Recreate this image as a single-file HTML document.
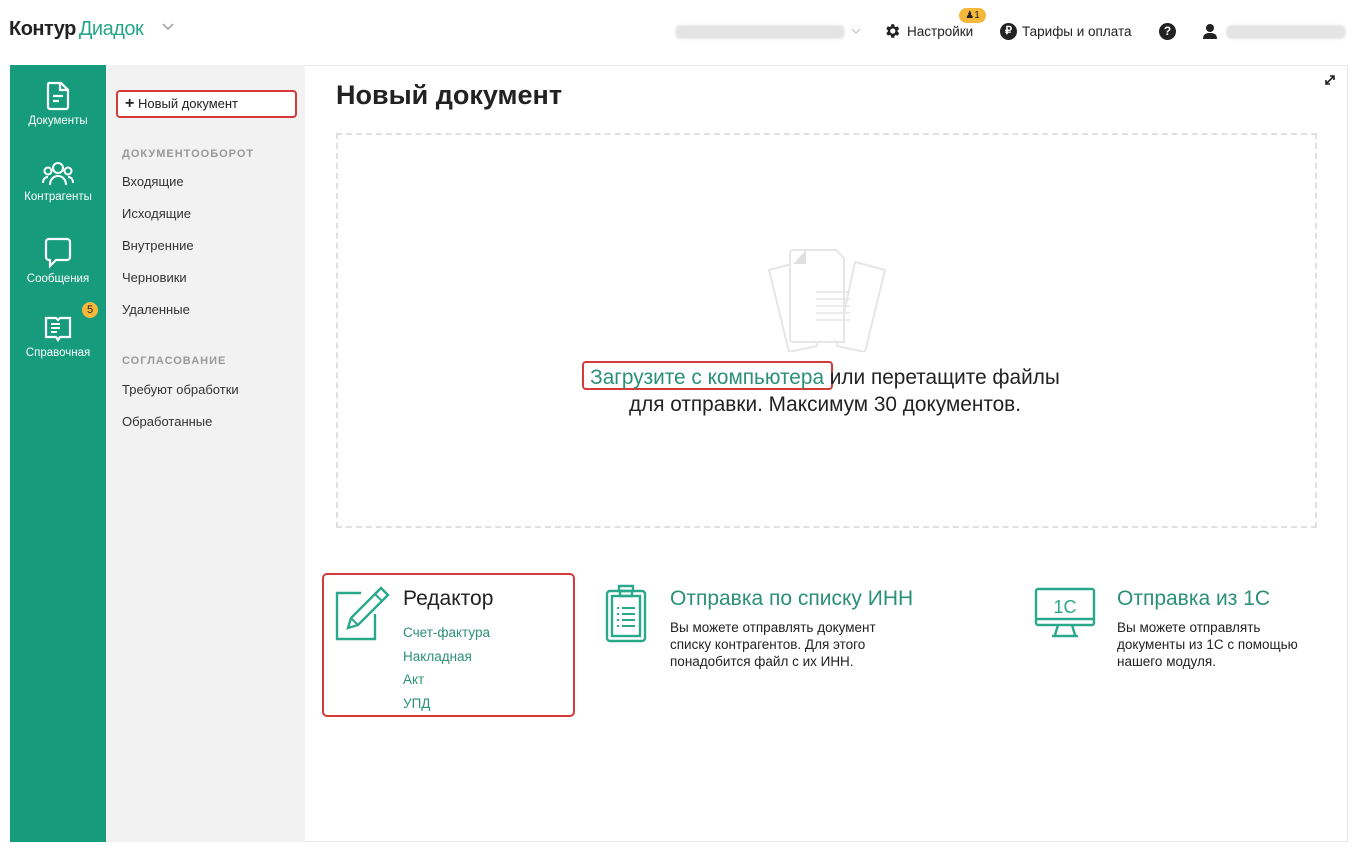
<!DOCTYPE html>
<html><head><meta charset="utf-8"><style>
*{box-sizing:border-box;margin:0;padding:0}
body{width:1361px;height:851px;background:#fff;font-family:"Liberation Sans",sans-serif;color:#222;position:relative;overflow:hidden}
.a{position:absolute}
.blur{background:#e4e4e4;border-radius:6px;filter:blur(1px)}
.nav{left:10px;top:65px;width:96px;height:777px;background:#169b7c}
.ni{position:absolute;left:0;width:96px;text-align:center;color:#fff;font-size:11.5px}
.ni svg{display:block;margin:0 auto 4px}
.menu{left:106px;top:65px;width:199px;height:777px;background:#f2f2f2}
.mi{position:absolute;left:16px;font-size:13px;color:#333}
.mh{position:absolute;left:16px;font-size:11px;color:#999;letter-spacing:1px;font-weight:bold}
.main{left:305px;top:65px;width:1043px;height:777px;border:1px solid #e8e8e8;border-left:none;background:#fff}
.g{color:#2a9077}
</style></head><body>
<div class="a" style="left:9px;top:18px;font-size:20px;font-weight:bold;letter-spacing:-0.5px;color:#222">Контур<span style="font-weight:normal;color:#27a68a;margin-left:3px">Диадок</span></div>
<svg class="a" style="left:162px;top:23px" width="12" height="8"><path d="M1 1l5 5 5-5" stroke="#999" stroke-width="1.5" fill="none"/></svg>
<div class="a blur" style="left:675px;top:25px;width:170px;height:14px"></div>
<svg class="a" style="left:851px;top:28px" width="10" height="7"><path d="M1 1l4 4 4-4" stroke="#bbb" fill="none"/></svg>
<svg class="a" style="left:883px;top:22px" width="18" height="18" viewBox="0 0 24 24"><path fill="#222" d="M19.4 13a7.5 7.5 0 000-2l2.1-1.6-2-3.5-2.5 1a7.6 7.6 0 00-1.7-1L15 3h-4l-.4 2.7a7.6 7.6 0 00-1.7 1l-2.5-1-2 3.5L6.5 11a7.5 7.5 0 000 2l-2.1 1.6 2 3.5 2.5-1a7.6 7.6 0 001.7 1L11 21h4l.4-2.7a7.6 7.6 0 001.7-1l2.5 1 2-3.5zM13 15.5a3.5 3.5 0 110-7 3.5 3.5 0 010 7z"/></svg>
<div class="a" style="left:907px;top:24px;font-size:13.5px">Настройки</div>
<div class="a" style="left:959px;top:8px;width:27px;height:15px;background:#f5b83a;border-radius:8px;font-size:10px;text-align:center;line-height:15px;color:#222">♟1</div>
<div class="a" style="left:1000px;top:23px;width:17px;height:17px;border-radius:50%;background:#222;color:#fff;font-size:11px;font-weight:bold;text-align:center;line-height:17px">₽</div>
<div class="a" style="left:1022px;top:24px;font-size:13.5px">Тарифы и оплата</div>
<div class="a" style="left:1159px;top:23px;width:17px;height:17px;border-radius:50%;background:#222;color:#fff;font-size:12px;font-weight:bold;text-align:center;line-height:17px">?</div>
<svg class="a" style="left:1202px;top:23px" width="16" height="16" viewBox="0 0 16 16"><circle cx="8" cy="5" r="4" fill="#222"/><path d="M1 16c0-5 3-6 7-6s7 1 7 6z" fill="#222"/></svg>
<div class="a blur" style="left:1226px;top:25px;width:120px;height:14px"></div>

<div class="a nav">
<div class="ni" style="top:16px"><svg width="24" height="30" viewBox="0 0 24 30"><path d="M3 2h12l7 7v17a2 2 0 01-2 2H4a2 2 0 01-2-2V4a2 2 0 011-2z" fill="none" stroke="#fff" stroke-width="2.2"/><path d="M14 2v7h7M7 15h10M7 20h6" stroke="#fff" stroke-width="2.2" fill="none"/></svg>Документы</div>
<div class="ni" style="top:96px"><svg width="34" height="26" viewBox="0 0 34 26"><g fill="none" stroke="#fff" stroke-width="2"><circle cx="17" cy="7" r="5"/><circle cx="7" cy="10" r="3.5"/><circle cx="27" cy="10" r="3.5"/><path d="M9 24c0-6 4-9 8-9s8 3 8 9M2 22c0-4 2-6 5-6M32 22c0-4-2-6-5-6"/></g></svg>Контрагенты</div>
<div class="ni" style="top:172px"><svg width="28" height="32" viewBox="0 0 28 32"><path d="M5 2h18a3 3 0 013 3v15a3 3 0 01-3 3H12l-6 6v-6H5a3 3 0 01-3-3V5a3 3 0 013-3z" fill="none" stroke="#fff" stroke-width="2.2"/></svg>Сообщения</div>
<div class="ni" style="top:250px"><svg width="30" height="28" viewBox="0 0 30 28"><path d="M3 3h10l2 2 2-2h10v19H17l-2 3-2-3H3z" fill="none" stroke="#fff" stroke-width="2.2"/><path d="M8 9h9M8 13h9M8 17h6" stroke="#fff" stroke-width="2"/></svg>Справочная</div>
<div class="a" style="left:72px;top:237px;width:16px;height:16px;border-radius:50%;background:#f5b83a;color:#222;font-size:11px;text-align:center;line-height:16px">5</div>
</div>

<div class="a menu">
<div class="a" style="left:10px;top:25px;width:181px;height:28px;border:2px solid #d33b3b;border-radius:4px;background:#fff;font-size:13px;line-height:24px;padding-left:7px;color:#222"><b style="font-size:16px">+</b> Новый документ</div>
<div class="mh" style="top:83px">ДОКУМЕНТООБОРОТ</div>
<div class="mi" style="top:109px">Входящие</div>
<div class="mi" style="top:141px">Исходящие</div>
<div class="mi" style="top:173px">Внутренние</div>
<div class="mi" style="top:205px">Черновики</div>
<div class="mi" style="top:237px">Удаленные</div>
<div class="mh" style="top:290px">СОГЛАСОВАНИЕ</div>
<div class="mi" style="top:317px">Требуют обработки</div>
<div class="mi" style="top:349px">Обработанные</div>
</div>

<div class="a main">
<svg class="a" style="left:1019px;top:8px" width="12" height="12"><path d="M2 10L10 2M6 2h4v4M2 6v4h4" stroke="#222" stroke-width="1.6" fill="none"/></svg>
<div class="a" style="left:31px;top:14px;font-size:27px;font-weight:bold;color:#222">Новый документ</div>
<div class="a" style="left:31px;top:67px;width:981px;height:395px;border:2px dashed #e0e0e0"></div>
<svg class="a" style="left:460px;top:182px" width="124" height="104" viewBox="0 0 124 104"><g fill="#fff" stroke="#e6e6e6" stroke-width="2"><path d="M4 22l30-8 18 84-28 6z" /><path d="M120 22l-30-8-18 84 28 6z"/><path d="M40 2h43l8 8v84H40a3 3 0 01-3-3V5a3 3 0 013-3z" transform="translate(-12 0)"/></g><path d="M41 2l-13 14h13z" fill="#e0e0e0"/><path d="M51 44h34M51 51h34M51 58h34M51 65h34M51 72h34" stroke="#e6e6e6" stroke-width="1.5"/></svg>
<div class="a" style="left:277px;top:295px;width:251px;height:29px;border:2px solid #d33b3b;border-radius:4px"></div>
<div class="a" style="left:180px;top:298px;width:680px;text-align:center;font-size:20.8px;line-height:27px;color:#222"><span class="g">Загрузите с компьютера</span> или перетащите файлы<br>для отправки. Максимум 30 документов.</div>

<div class="a" style="left:17px;top:507px;width:253px;height:144px;border:2px solid #d33b3b;border-radius:5px"></div>
<svg class="a" style="left:30px;top:520px" width="56" height="58" viewBox="0 0 56 58"><path d="M26 7H2v46h38V28" fill="none" stroke="#2aa88b" stroke-width="2.4"/><path d="M46 2l7 7-30 30-10 3 3-10z" fill="none" stroke="#2aa88b" stroke-width="2.4"/><path d="M40 8l7 7M16 32l7 7" stroke="#2aa88b" stroke-width="2"/></svg>
<div class="a" style="left:98px;top:521px;font-size:21px;color:#222">Редактор</div>
<div class="a g" style="left:98px;top:555px;font-size:13.5px;line-height:23.5px">Счет-фактура<br>Накладная<br>Акт<br>УПД</div>

<svg class="a" style="left:300px;top:517px" width="42" height="60" viewBox="0 0 42 60"><g fill="none" stroke="#2aa88b" stroke-width="2.4"><rect x="2" y="8" width="38" height="50" rx="3"/><rect x="7" y="13" width="28" height="40"/><path d="M14 8V3h14v5M15 8h12v5H15z"/><path d="M12 25h2M17 25h13M12 31h2M17 31h13M12 37h2M17 37h13M12 43h2M17 43h13" stroke-width="2"/></g></svg>
<div class="a" style="left:365px;top:521px;font-size:21px;color:#2a9077">Отправка по списку ИНН</div>
<div class="a" style="left:365px;top:553px;font-size:13.5px;line-height:17px;color:#222">Вы можете отправлять документ<br>списку контрагентов. Для этого<br>понадобится файл с их ИНН.</div>

<svg class="a" style="left:729px;top:521px" width="62" height="52" viewBox="0 0 62 52"><g fill="none" stroke="#2aa88b" stroke-width="2.4"><rect x="2" y="2" width="58" height="36" rx="2"/><path d="M2 32h58M24 38l-3 10M38 38l3 10M18 49h26"/></g><text x="31" y="26" font-family="Liberation Sans" font-size="18" fill="#2aa88b" text-anchor="middle">1С</text></svg>
<div class="a" style="left:812px;top:521px;font-size:21px;color:#2a9077">Отправка из 1С</div>
<div class="a" style="left:812px;top:553px;font-size:13.5px;line-height:17px;color:#222">Вы можете отправлять<br>документы из 1С с помощью<br>нашего модуля.</div>
</div>
</body></html>
